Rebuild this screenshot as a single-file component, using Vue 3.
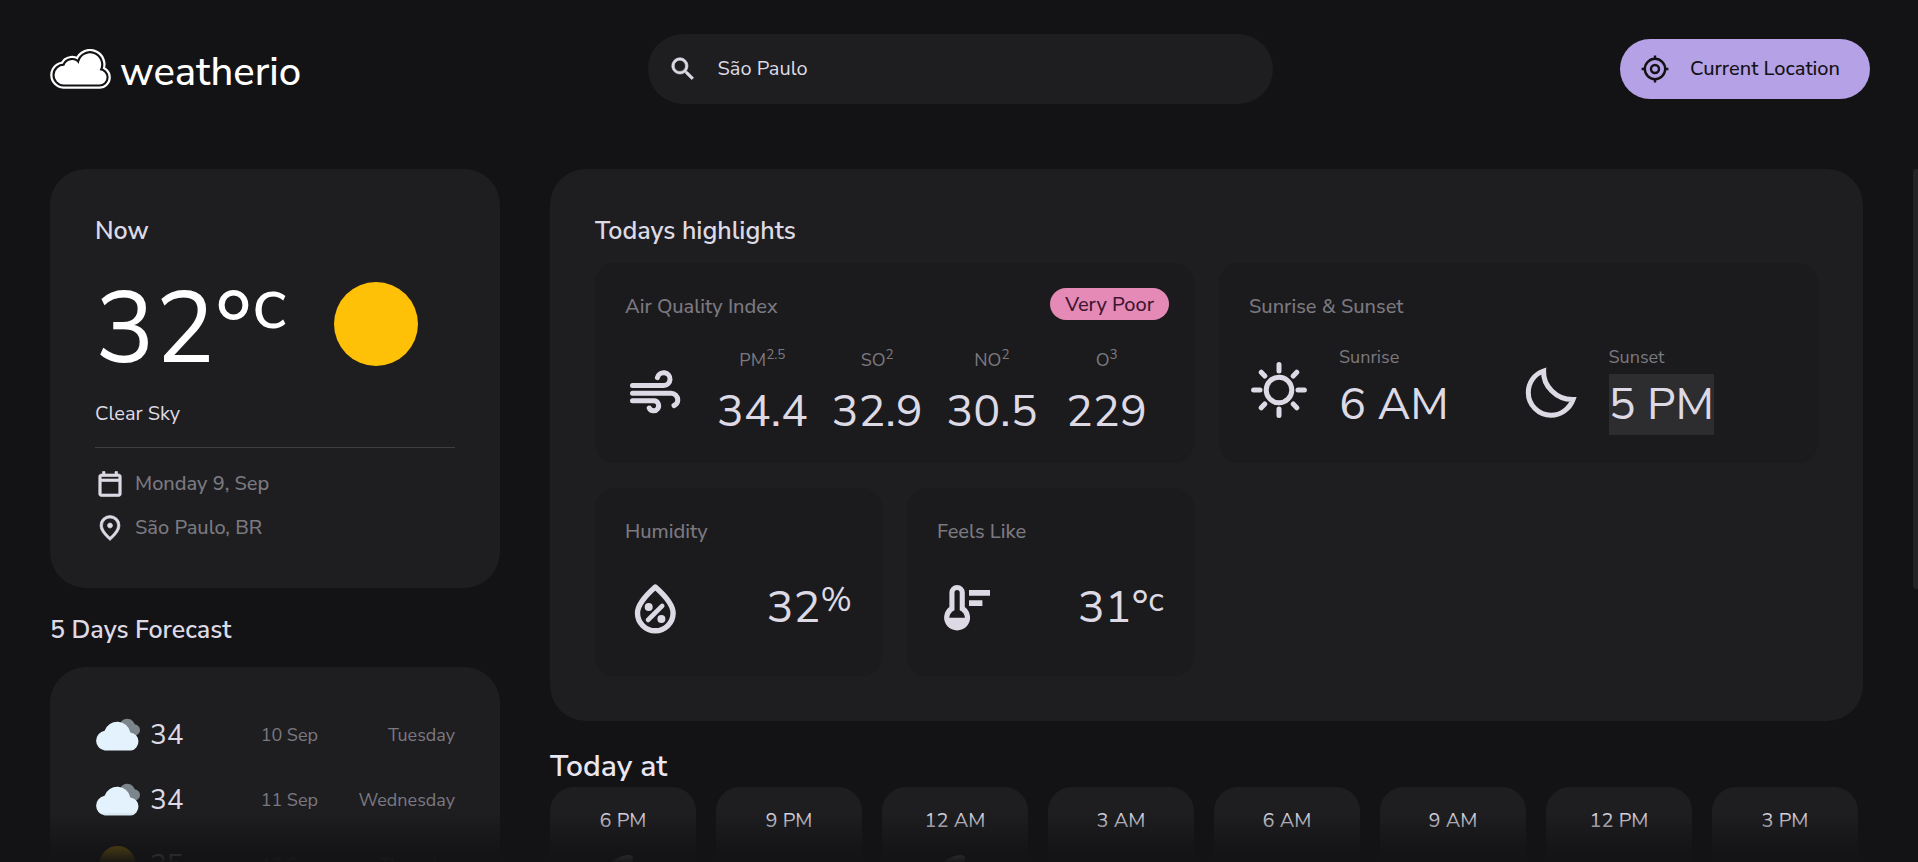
<script setup>
import { ref } from 'vue'

const query = ref('São Paulo')

const forecast = [
  { icon: 'cloud', temp: 34, date: '10 Sep', day: 'Tuesday' },
  { icon: 'cloud', temp: 34, date: '11 Sep', day: 'Wednesday' },
  { icon: 'sun', temp: 35, date: '12 Sep', day: 'Thursday' },
  { icon: 'sun', temp: 35, date: '13 Sep', day: 'Friday' },
]

const pollutants = [
  { name: 'PM', sup: '2.5', value: '34.4' },
  { name: 'SO', sup: '2', value: '32.9' },
  { name: 'NO', sup: '2', value: '30.5' },
  { name: 'O', sup: '3', value: '229' },
]

const hours = [
  { time: '6 PM', icon: 'moon' },
  { time: '9 PM', icon: 'cloud' },
  { time: '12 AM', icon: 'moon' },
  { time: '3 AM', icon: 'cloud' },
  { time: '6 AM', icon: 'cloud' },
  { time: '9 AM', icon: 'cloud' },
  { time: '12 PM', icon: 'cloud' },
  { time: '3 PM', icon: 'cloud' },
]
</script>

<template>
  <div class="page">
    <header class="header">
      <a href="#" class="logo" aria-label="weatherio home">
        <svg class="logo-mark" viewBox="0 0 61 40" stroke-linejoin="round" aria-hidden="true">
          <path class="mark-outer" d="M13.5 35.4A9.3 9.3 0 0 1 14.3 16.7A8 8 0 0 1 28.8 15A11.2 11.2 0 1 1 49.6 21.2A7.1 7.1 0 0 1 49.3 35.4Z" />
          <path class="mark-gap" d="M13.5 35.4A9.3 9.3 0 0 1 14.3 16.7A8 8 0 0 1 28.8 15A11.2 11.2 0 1 1 49.6 21.2A7.1 7.1 0 0 1 49.3 35.4Z" />
          <path class="mark-fill" d="M13.5 35.4A9.3 9.3 0 0 1 14.3 16.7A8 8 0 0 1 28.8 15A11.2 11.2 0 1 1 49.6 21.2A7.1 7.1 0 0 1 49.3 35.4Z" />
        </svg>
        <span class="logo-text">weatherio</span>
      </a>

      <label class="search">
        <svg class="icon-30 solid" viewBox="0 0 24 24" aria-hidden="true">
          <path d="M15.5 14h-.79l-.28-.27A6.47 6.47 0 0 0 16 9.5 6.5 6.5 0 1 0 9.5 16c1.61 0 3.09-.59 4.23-1.57l.27.28v.79l5 4.99L20.49 19l-4.99-5zm-6 0C7.01 14 5 11.99 5 9.5S7.01 5 9.5 5 14 7.01 14 9.5 11.99 14 9.5 14z" />
        </svg>
        <input v-model="query" type="text" aria-label="Search city" autocomplete="off" />
      </label>

      <button type="button" class="location-btn">
        <svg class="icon-30" viewBox="0 0 30 30" fill="none" stroke="currentColor" stroke-width="2.4" aria-hidden="true">
          <circle cx="15" cy="15" r="10.2" />
          <circle cx="15" cy="15" r="4" />
          <path d="M15 1.6v4M15 24.4v4M1.6 15h4M24.4 15h4" />
        </svg>
        <span>Current Location</span>
      </button>
    </header>

    <main class="main">
      <div class="content-left">
        <section class="card now" aria-label="Current weather">
          <h2 class="title-2">Now</h2>
          <div class="now-row">
            <p class="heading">32°<sup>c</sup></p>
            <svg class="now-icon" viewBox="0 0 128 128" aria-hidden="true">
              <circle cx="64" cy="63" r="42" fill="#fec107" />
            </svg>
          </div>
          <p class="body-3">Clear Sky</p>
          <ul class="meta-list">
            <li>
              <svg class="icon-30 solid" viewBox="0 0 24 24" aria-hidden="true">
                <path d="M5 22q-.825 0-1.413-.587Q3 20.825 3 20V6q0-.825.587-1.412Q4.175 4 5 4h1V2h2v2h8V2h2v2h1q.825 0 1.413.588Q21 5.175 21 6v14q0 .825-.587 1.413Q19.825 22 19 22Zm0-2h14V10H5Zm0-12h14V6H5Z" />
              </svg>
              <span>Monday 9, Sep</span>
            </li>
            <li>
              <svg class="icon-30 solid" viewBox="0 0 24 24" aria-hidden="true">
                <path d="M12 12q.825 0 1.413-.588Q14 10.825 14 10t-.587-1.413Q12.825 8 12 8t-1.412.587Q10 9.175 10 10t.588 1.412Q11.175 12 12 12Zm0 7.35q3.05-2.8 4.525-5.088Q18 11.975 18 10.2q0-2.725-1.738-4.463Q14.525 4 12 4 9.475 4 7.737 5.737 6 7.475 6 10.2q0 1.775 1.475 4.062Q8.95 16.55 12 19.35ZM12 22q-4.025-3.425-6.012-6.363Q4 12.7 4 10.2q0-3.75 2.413-5.975Q8.825 2 12 2t5.588 2.225Q20 6.45 20 10.2q0 2.5-1.988 5.437Q16.025 18.575 12 22Z" />
              </svg>
              <span>São Paulo, BR</span>
            </li>
          </ul>
        </section>

        <section class="forecast">
          <h2 class="title-2">5 Days Forecast</h2>
          <ul class="card forecast-list">
            <li v-for="item in forecast" :key="item.date">
              <div class="forecast-temp">
                <svg v-if="item.icon === 'cloud'" class="icon-45" viewBox="0 0 45 45" aria-hidden="true">
                  <g fill="#7b858b">
                    <circle cx="32.2" cy="14.6" r="7.8" />
                    <circle cx="39.2" cy="18" r="5.8" />
                  </g>
                  <path fill="#e3f2fd" d="M9.8 38.6A10 10 0 0 1 9.6 18.8A13.4 13.4 0 0 1 35.4 20.4A9.2 9.2 0 0 1 35.8 38.6Z" />
                </svg>
                <svg v-else class="icon-45" viewBox="0 0 45 45" aria-hidden="true">
                  <circle cx="22.5" cy="22" r="18" fill="#fec107" />
                </svg>
                <span>{{ item.temp }}</span>
              </div>
              <span class="label">{{ item.date }}</span>
              <span class="label">{{ item.day }}</span>
            </li>
          </ul>
        </section>
      </div>

      <div class="content-right">
        <section class="card highlights">
          <h2 class="title-2">Todays highlights</h2>
          <div class="highlight-grid">
            <article class="tile wide">
              <h3 class="title-3">Air Quality Index</h3>
              <span class="badge">Very Poor</span>
              <div class="tile-body air">
                <svg class="icon-60" viewBox="0 0 60 60" fill="none" stroke="currentColor" stroke-width="5" stroke-linecap="round" aria-hidden="true">
                  <path d="M7.5 22.5H38.8A6.4 6.4 0 1 0 32.4 14.6" />
                  <path d="M7.5 30.2H46A6.9 6.9 0 0 1 52.8 37.2Q52.6 41 49 42.6" />
                  <path d="M7.5 37.8H29.5A5 5 0 1 1 24.2 45" />
                </svg>
                <ul class="pollutants">
                  <li v-for="p in pollutants" :key="p.name">
                    <p class="label">{{ p.name }}<sup>{{ p.sup }}</sup></p>
                    <p class="title-1">{{ p.value }}</p>
                  </li>
                </ul>
              </div>
            </article>

            <article class="tile wide">
              <h3 class="title-3">Sunrise &amp; Sunset</h3>
              <div class="tile-body suntimes">
                <div class="suntime">
                  <svg class="icon-60" viewBox="0 0 60 60" fill="none" stroke="currentColor" stroke-width="5" stroke-linecap="round" aria-hidden="true">
                    <circle cx="30" cy="30" r="12.8" />
                    <path d="M30 4.6v6.4M30 49v6.4M4.6 30h6.4M49 30h6.4M12.2 12.2l3.6 3.8M47.8 12.2l-3.6 3.8M12.2 47.8l3.6-3.8M47.8 47.8l-3.6-3.8" />
                  </svg>
                  <div>
                    <p class="label">Sunrise</p>
                    <p class="title-1">6 AM</p>
                  </div>
                </div>
                <div class="suntime">
                  <svg class="icon-60" viewBox="0 0 60 60" fill="none" stroke="currentColor" stroke-width="5" aria-hidden="true">
                    <path d="M24.6 11C24 26 37.5 40 54 39.6C50.5 49 41.5 55.3 32 55.3C19.5 55.3 9.3 45 9.3 32.5C9.3 22.5 15.5 14 24.6 11Z" />
                  </svg>
                  <div>
                    <p class="label">Sunset</p>
                    <p class="title-1"><mark>5 PM</mark></p>
                  </div>
                </div>
              </div>
            </article>

            <article class="tile">
              <h3 class="title-3">Humidity</h3>
              <div class="tile-body simple">
                <svg class="icon-60" viewBox="0 0 60 60" fill="none" stroke="currentColor" stroke-width="5.4" stroke-linejoin="round" aria-hidden="true">
                  <path d="M30.3 9C23.5 15 12.5 25 12.5 35A17.8 17.8 0 0 0 48.1 35C48.1 25 37.1 15 30.3 9Z" />
                  <path d="M23 42L37.2 27.9" stroke-width="4.6" stroke-linecap="round" />
                  <circle cx="23.7" cy="28.9" r="4" fill="currentColor" stroke="none" />
                  <circle cx="36.4" cy="41" r="4" fill="currentColor" stroke="none" />
                </svg>
                <p class="title-1">32<sup>%</sup></p>
              </div>
            </article>

            <article class="tile">
              <h3 class="title-3">Feels Like</h3>
              <div class="tile-body simple">
                <svg class="icon-60" viewBox="0 0 60 60" fill="currentColor" aria-hidden="true">
                  <path fill-rule="evenodd" d="M12.4 29V14.7A7.7 7.7 0 0 1 27.8 14.7V29A13 13 0 1 1 12.4 29ZM17.5 14.7V32.3Q12.8 34.4 12.2 39.7H28Q27.4 34.4 22.7 32.3V14.7A2.6 2.6 0 0 0 17.5 14.7Z" />
                  <path d="M32 12h21v5.8H32zM32 22.3h13.4v5.8H32z" />
                </svg>
                <p class="title-1">31°<sup>c</sup></p>
              </div>
            </article>
          </div>
        </section>

        <section class="hourly">
          <h2 class="title-today">Today at</h2>
          <ul class="hour-list">
            <li v-for="h in hours" :key="h.time" class="hour-card">
              <p>{{ h.time }}</p>
              <svg v-if="h.icon === 'moon'" class="icon-45" viewBox="0 0 45 45" aria-hidden="true">
                <path fill="#c3cdd6" d="M28 0Q33 0 31.5 6C28 14 30 26 44 30C36 46 12 46 5 28C1 14 12 1 28 0Z" />
              </svg>
              <svg v-else class="icon-45" viewBox="0 0 45 45" aria-hidden="true">
                <circle cx="32.2" cy="14.6" r="7.8" fill="#7b858b" />
                <path fill="#e3f2fd" d="M9.8 38.6A10 10 0 0 1 9.6 18.8A13.4 13.4 0 0 1 35.4 20.4A9.2 9.2 0 0 1 35.8 38.6Z" />
              </svg>
            </li>
          </ul>
        </section>
      </div>

      <div class="fade"></div>
      <div class="scroll-thumb"></div>
    </main>
  </div>
</template>

<style>
body {
  background: #131315;
}
</style>

<style scoped>
.page {
  height: 100vh;
  display: flex;
  flex-direction: column;
  overflow: hidden;
  background: #131315;
  color: #dddae5;
  font-family: "Nunito Sans", Lato, "Open Sans", sans-serif;
  font-size: 20px;
  line-height: 26px;
}
.page * {
  box-sizing: border-box;
}
h2,
h3,
p,
ul {
  margin: 0;
  padding: 0;
  font-weight: 400;
}
ul {
  list-style: none;
}
svg {
  display: block;
  flex-shrink: 0;
}
.icon-30 {
  width: 30px;
  height: 30px;
}
.icon-45 {
  width: 45px;
  height: 45px;
}
.icon-60 {
  width: 60px;
  height: 60px;
}
.solid {
  fill: currentColor;
  stroke: currentColor;
  stroke-width: 0.5;
}

.header {
  display: grid;
  grid-template-columns: 1fr 625px 1fr;
  align-items: center;
  padding: 34px 48px 34px 50px;
  flex-shrink: 0;
}
.logo {
  display: flex;
  align-items: center;
  gap: 9px;
  color: #fff;
  text-decoration: none;
}
.logo-mark {
  width: 61px;
  height: 40px;
}
.mark-outer {
  fill: #fff;
  stroke: #fff;
  stroke-width: 8.6;
}
.mark-gap {
  fill: none;
  stroke: #131315;
  stroke-width: 4.2;
}
.mark-fill {
  fill: #fff;
}
.logo-text {
  padding-top: 5px;
  font-size: 40px;
  line-height: 48px;
  font-weight: 500;
}
.search {
  display: flex;
  align-items: center;
  gap: 20px;
  height: 70px;
  padding: 0 20px;
  border-radius: 35px;
  background: #1e1e20;
}
.search input {
  flex: 1;
  min-width: 0;
  padding: 0;
  border: 0;
  outline: 0;
  background: none;
  color: inherit;
  font: inherit;
}
.location-btn {
  justify-self: end;
  display: flex;
  align-items: center;
  gap: 20px;
  height: 60px;
  padding: 0 30px 0 20px;
  border: 0;
  border-radius: 30px;
  background: #b5a1e5;
  color: #131214;
  font: inherit;
  font-weight: 500;
}

.main {
  position: relative;
  flex: 1;
  min-height: 0;
  overflow: hidden;
  display: grid;
  grid-template-columns: 450px minmax(0, 1fr);
  align-items: start;
  gap: 50px;
  padding: 31px 55px 0 50px;
}
.card {
  background: #1e1e20;
  border-radius: 36px;
  padding: 45px;
}
.title-2 {
  font-size: 25px;
  line-height: 34px;
  font-weight: 600;
}
.now-row {
  display: flex;
  align-items: center;
  gap: 25px;
  height: 129px;
  margin: 12px 0;
}
.heading {
  padding-top: 9px;
  color: #fff;
  font-size: 100px;
  line-height: 120px;
}
.heading sup {
  font-size: 75%;
  line-height: 0;
}
.title-1 sup {
  font-size: 75%;
  line-height: 0;
  vertical-align: 11px;
}
.now-icon {
  width: 128px;
  height: 128px;
}
.meta-list {
  display: grid;
  gap: 14px;
  margin-top: 20px;
  padding-top: 21px;
  border-top: 1px solid #3e3d40;
}
.meta-list li {
  display: flex;
  align-items: center;
  gap: 10px;
}
.meta-list span,
.label,
.title-3 {
  color: #7b7980;
}
.meta-list span,
.title-3 {
  font-weight: 500;
}
.forecast {
  margin-top: 25px;
}
.forecast-list {
  display: grid;
  gap: 20px;
  margin-top: 20px;
}
.forecast-list li {
  display: grid;
  grid-template-columns: 1fr auto 137px;
  align-items: center;
}
.forecast-temp {
  display: flex;
  align-items: center;
  gap: 10px;
  font-size: 28px;
  line-height: 38px;
}
.forecast-list .label {
  padding-top: 2px;
  text-align: right;
}
.label {
  font-size: 18px;
  line-height: 27px;
}
.title-3 {
  font-size: 20px;
  line-height: 28px;
}
.title-1 {
  font-size: 45px;
  line-height: 61px;
}

.highlight-grid {
  display: grid;
  grid-template-columns: repeat(4, 1fr);
  gap: 25px;
  margin-top: 15px;
}
.tile {
  position: relative;
  padding: 30px 30px 38px;
  border-radius: 20px;
  background: #1b1b1d;
}
.tile.wide {
  grid-column: span 2;
  padding-bottom: 21px;
}
.badge {
  position: absolute;
  top: 25px;
  right: 25px;
  padding: 4px 15px 2px;
  border-radius: 16px;
  background: #e589b7;
  color: #401630;
  font-weight: 500;
}
.tile-body {
  display: flex;
  align-items: center;
}
.tile-body.air {
  gap: 20px;
  margin-top: 23px;
}
.pollutants {
  flex: 1;
  display: grid;
  grid-template-columns: repeat(4, 1fr);
  text-align: center;
}
.pollutants .label {
  line-height: 32px;
}
.label sup {
  font-size: 75%;
  line-height: 0;
}
.label + .title-1 {
  margin-top: 3px;
}
.pollutants .label + .title-1 {
  margin-top: 5px;
}
.suntimes {
  display: grid;
  grid-template-columns: 1fr 1fr;
  margin-top: 23px;
}
.suntime {
  display: flex;
  align-items: center;
  gap: 30px;
}
mark {
  display: inline-block;
  background: #2d2d2f;
  color: inherit;
}
.tile-body.simple {
  justify-content: space-between;
  margin-top: 31px;
}

.hourly {
  margin-top: 25px;
}
.title-today {
  font-size: 30px;
  line-height: 41px;
  font-weight: 600;
  color: #eae6f2;
}
.hour-list {
  display: grid;
  grid-template-columns: repeat(8, 1fr);
  gap: 20px;
  padding-right: 5px;
}
.hour-card {
  display: flex;
  flex-direction: column;
  align-items: center;
  gap: 20px;
  padding: 20px;
  border-radius: 24px;
  background: #1e1e20;
  line-height: 28px;
}
.fade {
  position: absolute;
  left: 0;
  right: 0;
  bottom: 0;
  height: 50px;
  background: linear-gradient(180deg, rgba(19, 19, 21, 0), rgba(19, 19, 21, 0.78) 68%, rgba(19, 19, 21, 0.97));
}
.scroll-thumb {
  position: absolute;
  top: 31px;
  right: 0;
  width: 5px;
  height: 58%;
  border-radius: 3px 0 0 3px;
  background: #242426;
}
</style>
